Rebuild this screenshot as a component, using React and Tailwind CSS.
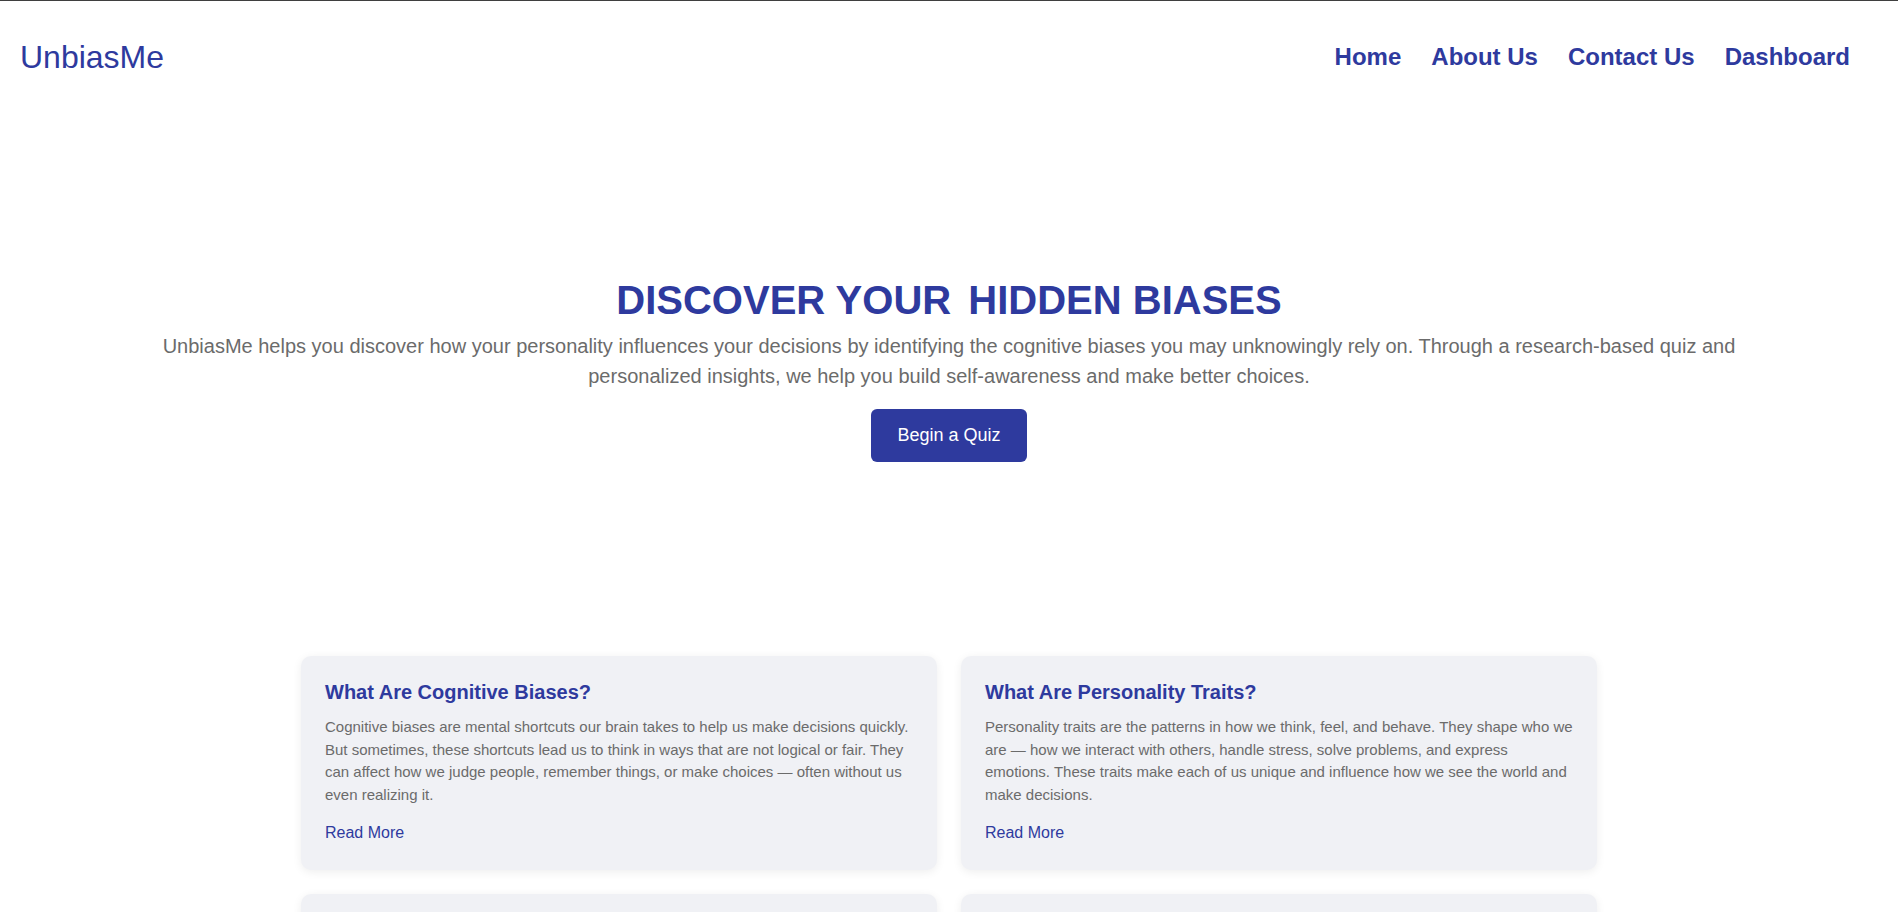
const navItems = ['Home', 'About Us', 'Contact Us', 'Dashboard'];

const cards = [
  {
    title: 'What Are Cognitive Biases?',
    body: 'Cognitive biases are mental shortcuts our brain takes to help us make decisions quickly. But sometimes, these shortcuts lead us to think in ways that are not logical or fair. They can affect how we judge people, remember things, or make choices — often without us even realizing it.',
  },
  {
    title: 'What Are Personality Traits?',
    body: 'Personality traits are the patterns in how we think, feel, and behave. They shape who we are — how we interact with others, handle stress, solve problems, and express emotions. These traits make each of us unique and influence how we see the world and make decisions.',
  },
  {
    title: 'How Are They Connected?',
    body: 'Our personality can make us more likely to rely on certain biases. By understanding both, we can spot the patterns behind our choices and learn to think more clearly.',
  },
  {
    title: 'How Does the Quiz Work?',
    body: 'Answer a short set of research-based questions about how you think and act. We match your answers to common biases and give you personalized insights to help you grow.',
  },
];

const Card = ({ title, body }) => (
  <div className="bg-[#f0f1f5] rounded-[10px] p-6 shadow-[0_2px_10px_rgba(0,0,0,0.07)]">
    <h3 className="text-[20px] leading-[24px] font-bold text-[#2e3a9e]">{title}</h3>
    <p className="mt-3 text-[15px] leading-[22.6px] text-[#6b6b6b]">{body}</p>
    <a href="#" className="block mt-[14px] text-[16px] leading-[25.6px] text-[#2e3a9e]">
      Read More
    </a>
  </div>
);

export default function App() {
  return (
    <div className="min-h-screen bg-white border-t border-[#3f3f3f] font-['Liberation_Sans',Arial,sans-serif]">
      {/* Header */}
      <header className="h-[112px] flex items-center justify-between pl-5 pr-12">
        <a href="#" className="text-[32px] leading-[38px] text-[#2e3a9e]">UnbiasMe</a>
        <nav className="flex items-center gap-[30px]">
          {navItems.map((item) => (
            <a key={item} href="#" className="text-[24px] leading-[28px] font-bold text-[#2e3a9e]">
              {item}
            </a>
          ))}
        </nav>
      </header>

      {/* Hero */}
      <section className="h-[512px] flex flex-col items-center justify-center px-[150px] text-center">
        <h1 className="text-[40px] leading-[46px] font-bold text-[#2e3a9e]">
          DISCOVER YOUR <span className="ml-[6px]">HIDDEN BIASES</span>
        </h1>
        <p className="mt-2 text-[20px] leading-[30px] text-[#6b6b6b]">
          UnbiasMe helps you discover how your personality influences your decisions by identifying the cognitive biases you may unknowingly rely on. Through a research-based quiz and personalized insights, we help you build self-awareness and make better choices.
        </p>
        <button className="mt-[18px] bg-[#2e3a9e] text-white text-[18px] leading-[27px] px-[26px] py-[13px] rounded-[6px]">
          Begin a Quiz
        </button>
      </section>

      {/* Info cards */}
      <section className="pt-[31px] pb-16">
        <div className="w-[1296px] mx-auto grid grid-cols-2 gap-6">
          {cards.map((c) => (
            <Card key={c.title} {...c} />
          ))}
        </div>
      </section>
    </div>
  );
}
